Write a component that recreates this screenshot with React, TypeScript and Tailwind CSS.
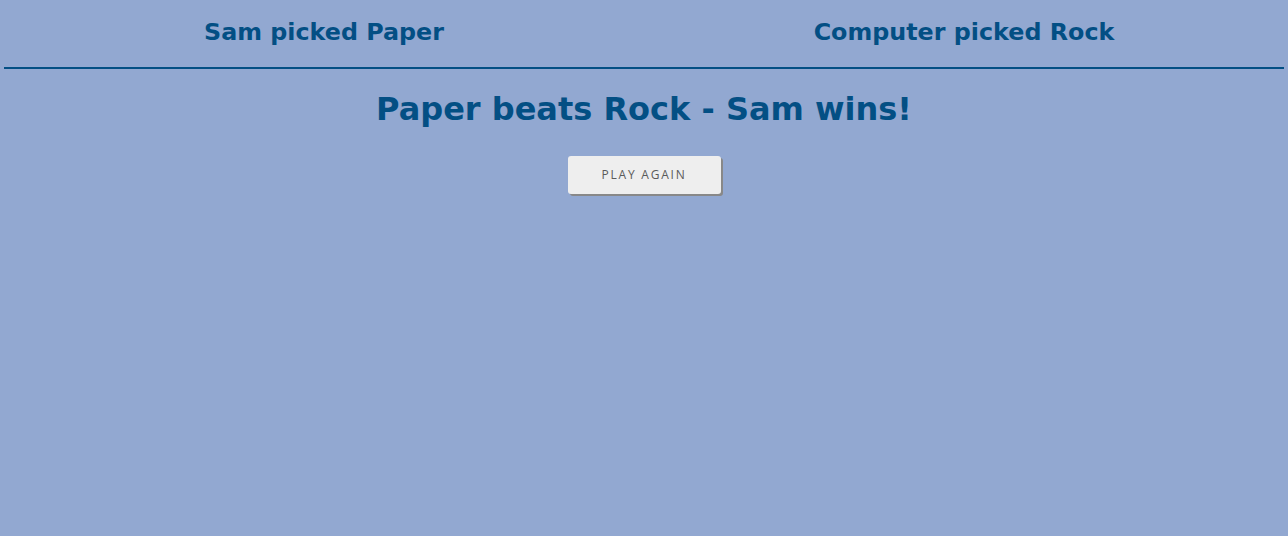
export default function App() {
  return (
    <div
      className="min-h-screen w-full bg-[#92a8d1] px-[4px] text-[#034f84]"
      style={{ fontFamily: '"DejaVu Sans", sans-serif' }}
    >
      <div className="flex border-b-2 border-[#034f84] pt-[18px] pb-[21px]">
        <h2 className="flex-1 text-center text-[23.8px] font-bold leading-[28px]">Sam picked Paper</h2>
        <h2 className="flex-1 text-center text-[23.8px] font-bold leading-[28px]">Computer picked Rock</h2>
      </div>
      <h1 className="mt-[22px] text-center text-[32px] font-bold leading-[37px]">Paper beats Rock - Sam wins!</h1>
      <div className="mt-[28px] flex justify-center">
        <button
          className="h-[38px] w-[153px] rounded-[3px] bg-[#eeeeee] text-[12px] uppercase tracking-[1.8px] text-[#5a5a5a] shadow-[2px_2px_0_#888888]"
          style={{ fontFamily: '"Open Sans", sans-serif' }}
        >
          Play Again
        </button>
      </div>
    </div>
  );
}
